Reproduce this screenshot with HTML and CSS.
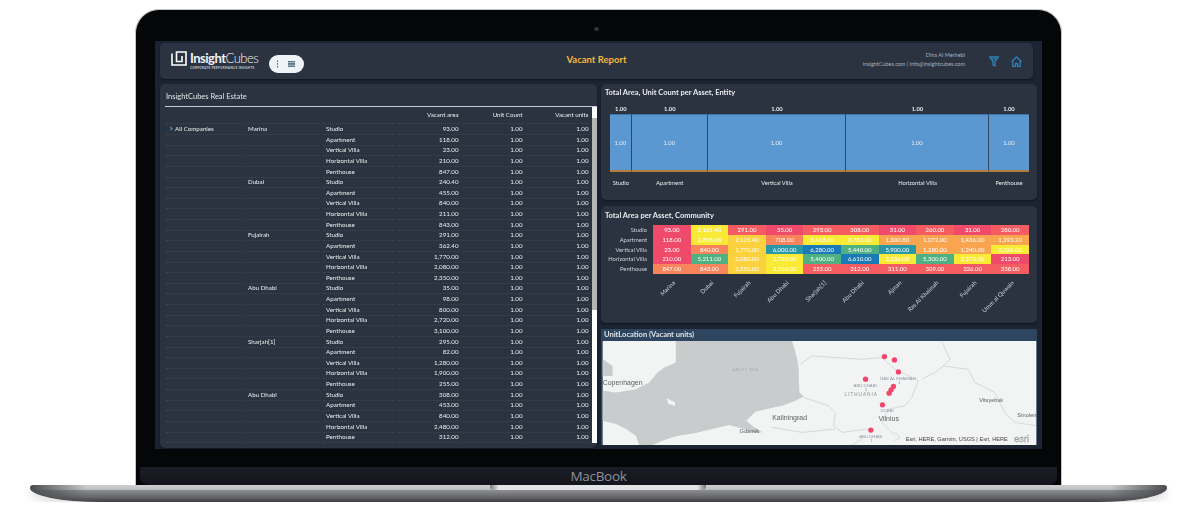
FILE: index.html
```html
<!DOCTYPE html>
<html lang="en">
<head>
    <meta charset="UTF-8">
    <meta name="viewport" content="width=device-width, initial-scale=1.0">
    <title>Vacant Report</title>
    <link rel="stylesheet" href="styles.css">
</head>
<body>
    <div class="laptop">
        <div class="lid">
            <div class="camera"></div>
            <div class="screen">
                <header class="topbar">
                    <div class="brand">
                        <svg class="logo-icon" viewBox="0 0 16 15" width="16" height="15"><path d="M1 2.5v11.500h14V1H5.500v9.500H11V5" fill="none" stroke="#fff" stroke-width="1.600"/></svg>
                        <div class="logo-text">
                            <div class="logo-name"><b>Insight</b>Cubes</div>
                            <div class="logo-sub">CORPORATE PERFORMANCE INSIGHTS</div>
                        </div>
                        <div class="pill">
                            <svg viewBox="0 0 3 8" width="3" height="8"><path d="M1.500 .5v1.500M1.500 3.200v1.500M1.500 6v1.500" stroke="#3d5a6c" stroke-width="1"/></svg>
                            <svg viewBox="0 0 7 6" width="7" height="6"><path d="M0 .7h7M0 2.300h7M0 3.800h7M0 5.300h7" stroke="#3d5a6c" stroke-width="1"/></svg>
                        </div>
                    </div>
                    <h1 class="report-title">Vacant Report</h1>
                    <div class="user">
                        <div class="user-text">
                            <div>Dina Al Merhebi</div>
                            <div>InsightCubes.com | info@insightcubes.com</div>
                        </div>
                        <svg viewBox="0 0 10 11" width="10" height="11"><path d="M.7 1h8.600L6 5.500V10L4 8.800V5.500ZM3 3.200h4" fill="none" stroke="#2f81b7" stroke-width="1.300"/></svg>
                        <svg viewBox="0 0 11 11" width="11" height="11"><path d="M.5 5.700 5.500 1l5 4.700M1.800 5v5.500h2.700V7.500h2v3h2.700V5" fill="none" stroke="#2f81b7" stroke-width="1.300"/></svg>
                    </div>
                </header>
                <div class="main">
                    <section class="panel table-panel">
                        <h2 class="table-title">InsightCubes Real Estate</h2>
                        <div class="table-wrap">
                            <div class="table">
                                <div class="row head"><span></span><span></span><span></span><span class="num">Vacant area</span><span class="num">Unit Count</span><span class="num">Vacant units</span></div>
                                <div class="row"><span class="tree"><i class="arrow"></i>All Companies</span><span>Marina</span><span>Studio</span><span class="num">93.00</span><span class="num">1.00</span><span class="num">1.00</span></div>
                                <div class="row"><span></span><span></span><span>Apartment</span><span class="num">118.00</span><span class="num">1.00</span><span class="num">1.00</span></div>
                                <div class="row"><span></span><span></span><span>Vertical Villa</span><span class="num">23.00</span><span class="num">1.00</span><span class="num">1.00</span></div>
                                <div class="row"><span></span><span></span><span>Horizontal Villa</span><span class="num">210.00</span><span class="num">1.00</span><span class="num">1.00</span></div>
                                <div class="row"><span></span><span></span><span>Penthouse</span><span class="num">847.00</span><span class="num">1.00</span><span class="num">1.00</span></div>
                                <div class="row"><span></span><span>Dubai</span><span>Studio</span><span class="num">240.40</span><span class="num">1.00</span><span class="num">1.00</span></div>
                                <div class="row"><span></span><span></span><span>Apartment</span><span class="num">455.00</span><span class="num">1.00</span><span class="num">1.00</span></div>
                                <div class="row"><span></span><span></span><span>Vertical Villa</span><span class="num">840.00</span><span class="num">1.00</span><span class="num">1.00</span></div>
                                <div class="row"><span></span><span></span><span>Horizontal Villa</span><span class="num">211.00</span><span class="num">1.00</span><span class="num">1.00</span></div>
                                <div class="row"><span></span><span></span><span>Penthouse</span><span class="num">843.00</span><span class="num">1.00</span><span class="num">1.00</span></div>
                                <div class="row"><span></span><span>Fujairah</span><span>Studio</span><span class="num">291.00</span><span class="num">1.00</span><span class="num">1.00</span></div>
                                <div class="row"><span></span><span></span><span>Apartment</span><span class="num">362.40</span><span class="num">1.00</span><span class="num">1.00</span></div>
                                <div class="row"><span></span><span></span><span>Vertical Villa</span><span class="num">1,770.00</span><span class="num">1.00</span><span class="num">1.00</span></div>
                                <div class="row"><span></span><span></span><span>Horizontal Villa</span><span class="num">2,080.00</span><span class="num">1.00</span><span class="num">1.00</span></div>
                                <div class="row"><span></span><span></span><span>Penthouse</span><span class="num">2,350.00</span><span class="num">1.00</span><span class="num">1.00</span></div>
                                <div class="row"><span></span><span>Abu Dhabi</span><span>Studio</span><span class="num">35.00</span><span class="num">1.00</span><span class="num">1.00</span></div>
                                <div class="row"><span></span><span></span><span>Apartment</span><span class="num">98.00</span><span class="num">1.00</span><span class="num">1.00</span></div>
                                <div class="row"><span></span><span></span><span>Vertical Villa</span><span class="num">800.00</span><span class="num">1.00</span><span class="num">1.00</span></div>
                                <div class="row"><span></span><span></span><span>Horizontal Villa</span><span class="num">2,720.00</span><span class="num">1.00</span><span class="num">1.00</span></div>
                                <div class="row"><span></span><span></span><span>Penthouse</span><span class="num">3,100.00</span><span class="num">1.00</span><span class="num">1.00</span></div>
                                <div class="row"><span></span><span>Sharjah[1]</span><span>Studio</span><span class="num">295.00</span><span class="num">1.00</span><span class="num">1.00</span></div>
                                <div class="row"><span></span><span></span><span>Apartment</span><span class="num">82.00</span><span class="num">1.00</span><span class="num">1.00</span></div>
                                <div class="row"><span></span><span></span><span>Vertical Villa</span><span class="num">1,280.00</span><span class="num">1.00</span><span class="num">1.00</span></div>
                                <div class="row"><span></span><span></span><span>Horizontal Villa</span><span class="num">1,900.00</span><span class="num">1.00</span><span class="num">1.00</span></div>
                                <div class="row"><span></span><span></span><span>Penthouse</span><span class="num">255.00</span><span class="num">1.00</span><span class="num">1.00</span></div>
                                <div class="row"><span></span><span>Abu Dhabi</span><span>Studio</span><span class="num">308.00</span><span class="num">1.00</span><span class="num">1.00</span></div>
                                <div class="row"><span></span><span></span><span>Apartment</span><span class="num">453.00</span><span class="num">1.00</span><span class="num">1.00</span></div>
                                <div class="row"><span></span><span></span><span>Vertical Villa</span><span class="num">840.00</span><span class="num">1.00</span><span class="num">1.00</span></div>
                                <div class="row"><span></span><span></span><span>Horizontal Villa</span><span class="num">2,480.00</span><span class="num">1.00</span><span class="num">1.00</span></div>
                                <div class="row"><span></span><span></span><span>Penthouse</span><span class="num">312.00</span><span class="num">1.00</span><span class="num">1.00</span></div>
                            </div>
                            <div class="scrollbar"><div class="thumb"></div></div>
                        </div>
                    </section>
                    <div class="charts">
                        <section class="panel chart-panel">
                            <h2 class="chart-title">Total Area, Unit Count per Asset, Entity</h2>
                            <div class="mekko">
                                <span>1.00</span><span>1.00</span><span>1.00</span><span>1.00</span><span>1.00</span>
                                <span class="bar">1.00</span><span class="bar">1.00</span><span class="bar">1.00</span><span class="bar">1.00</span><span class="bar">1.00</span>
                                <span class="mekko-label">Studio</span><span class="mekko-label">Apartment</span><span class="mekko-label">Vertical Villa</span><span class="mekko-label">Horizontal Villa</span><span class="mekko-label">Penthouse</span>
                            </div>
                        </section>
                        <section class="panel chart-panel">
                            <h2 class="chart-title heat-title">Total Area per Asset, Community</h2>
                            <div class="heat">
                                <span class="heat-row">Studio</span>
                                <span class="c1">93.00</span><span class="c6">3,165.40</span><span class="c2">291.00</span><span class="c1">35.00</span><span class="c2">293.00</span><span class="c2">308.00</span><span class="c1">31.00</span><span class="c2">260.00</span><span class="c1">31.00</span><span class="c2">280.00</span>
                                <span class="heat-row">Apartment</span>
                                <span class="c1">118.00</span><span class="c6">2,893.00</span><span class="c5">2,125.40</span><span class="c3">708.00</span><span class="c6">3,418.00</span><span class="c6">3,782.00</span><span class="c4">1,300.80</span><span class="c4">1,072.00</span><span class="c4">1,436.00</span><span class="c4">1,293.20</span>
                                <span class="heat-row">Vertical Villa</span>
                                <span class="c1">23.00</span><span class="c3">840.00</span><span class="c5">1,770.00</span><span class="c8">6,000.00</span><span class="c9">6,280.00</span><span class="c7">5,440.00</span><span class="c8">5,900.00</span><span class="c4">1,280.00</span><span class="c4">1,240.00</span><span class="c6">3,336.00</span>
                                <span class="heat-row">Horizontal Villa</span>
                                <span class="c1">210.00</span><span class="c7">5,211.00</span><span class="c5">2,080.00</span><span class="c6">2,720.00</span><span class="c7">5,400.00</span><span class="c9">6,610.00</span><span class="c6">3,136.00</span><span class="c7">5,300.00</span><span class="c6">2,573.00</span><span class="c1">213.00</span>
                                <span class="heat-row">Penthouse</span>
                                <span class="c3">847.00</span><span class="c3">843.00</span><span class="c5">2,350.00</span><span class="c6">3,100.00</span><span class="c2">255.00</span><span class="c2">312.00</span><span class="c2">311.00</span><span class="c2">309.00</span><span class="c2">326.00</span><span class="c2">338.00</span>
                            </div>
                            <div class="heat-axis">
                                <div><span>Marina</span></div><div><span>Dubai</span></div><div><span>Fujairah</span></div><div><span>Abu Dhabi</span></div><div><span>Sharjah[1]</span></div><div><span>Abu Dhabi</span></div><div><span>Ajman</span></div><div><span>Ras Al Khaimah</span></div><div><span>Fujairah</span></div><div><span>Umm al Quwain</span></div>
                            </div>
                        </section>
                        <section class="map-panel">
                            <h2 class="map-title">UnitLocation (Vacant units)</h2>
                            <svg class="map" viewBox="20 45 1305 313" width="435" height="104">
                                <rect x="20" y="45" width="1305" height="313" fill="#f2f3f3"/>
                                <path class="sea" d="M240 45H590C600 80 612 110 610 150L612 200 625 212 600 225 560 240 520 248 480 258 452 285 470 300 500 320 480 322 440 308 400 298 350 310 300 322 240 332 200 345 170 358H130L120 330 90 310 60 295 20 285V195L60 200 120 190 160 170 185 140 205 125 240 110Z"/>
                                <path class="sea" d="M20 100 50 120V150H20Z"/>
                                <path d="M214 217 238 229 237 241 216 233Z" fill="#f2f3f3"/>
                                <path class="border" d="M615 115 650 90 720 95 800 100 860 95 900 130 970 165 950 215 930 240 880 250 860 290 900 330M1040 45 1065 100 1045 120 1020 140 980 160M1045 120 1120 130 1140 170 1200 200 1230 260 1260 290 1325 300M625 215 700 240 720 260 715 300 740 320 820 310M530 305 620 320 720 310M900 320 915 335 900 345M770 358 800 340"/>
                                <text class="city" x="20" y="176">Copenhagen</text>
                                <text class="faint" x="410" y="135">BALTIC SEA</text>
                                <text class="city" x="530" y="284">Kaliningrad</text>
                                <text class="faint" x="605" y="282">SIA</text>
                                <text class="city small" x="432" y="322">Gdansk</text>
                                <text class="country" x="748" y="211">LITHUANIA</text>
                                <text class="city" x="850" y="285">Vilnius</text>
                                <text class="city small" x="1153" y="230">Vitsyebsk</text>
                                <text class="city small" x="1268" y="274">Smolensk</text>
                                <text class="pin-label" x="855" y="161">RAS AL KHAIMAH</text>
                                <text class="pin-label" x="909" y="174">1</text>
                                <text class="pin-label" x="775" y="182">ABU DHABI</text>
                                <text class="pin-label" x="809" y="196">1</text>
                                <text class="pin-label" x="856" y="259">DUBAI</text>
                                <text class="pin-label" x="792" y="336">ABU DHABI</text>
                                <text class="pin-label" x="825" y="349">1</text>
                                <g class="pins">
                                    <circle cx="868" cy="92" r="8"/><circle cx="898" cy="102" r="8"/><circle cx="910" cy="138" r="8"/>
                                    <circle cx="811" cy="160" r="8"/><circle cx="895" cy="182" r="8"/><circle cx="888" cy="192" r="8"/>
                                    <circle cx="882" cy="202" r="8"/><circle cx="862" cy="237" r="8"/><circle cx="827" cy="313" r="8"/>
                                </g>
                                <rect x="928" y="330" width="317" height="22" fill="#f2f3f3" opacity=".8"/>
                                <text class="credit" x="932" y="347">Esri, HERE, Garmin, USGS | Esri, HERE</text>
                                <text class="esri" x="1258" y="350">esri</text>
                            </svg>
                        </section>
                    </div>
                </div>
            </div>
            <div class="chin">MacBook</div>
        </div>
        <div class="base"><div class="notch"></div></div>
    </div>
</body>
</html>
```

FILE: styles.css
```css
body {
    margin: 0;
    background: #fff;
    font-family: Lato, "Liberation Sans", sans-serif;
    overflow: hidden;
}

.laptop {
    padding: 9px 12px 0 30px;
}

/* lid + screen */
.lid {
    box-sizing: border-box;
    width: 927px;
    height: 476px;
    margin-left: 105px;
    padding: 31px 20px 0;
    background: #040607;
    border: 1px solid #c4c5c6;
    border-bottom: 0;
    border-radius: 24px 24px 0 0;
    position: relative;
}
.camera {
    position: absolute;
    top: 17px;
    left: 458px;
    width: 5px;
    height: 4px;
    border-radius: 50%;
    background: #30343a;
}
.screen {
    box-sizing: border-box;
    width: 887px;
    height: 408px;
    margin-left: -1px;
    padding: 2px 5px 0;
    background: #1c2433;
    filter: blur(.3px);
}
.chin {
    position: absolute;
    left: 4px;
    right: 4px;
    bottom: 0;
    height: 18px;
    background: linear-gradient(#1b1d25, #15161c);
    border-radius: 0 0 8px 8px;
    color: #8f9196;
    font-family: "Open Sans", sans-serif;
    font-size: 13.500px;
    line-height: 18px;
    text-align: center;
    letter-spacing: -.3px;
}

/* top bar */
.topbar {
    display: grid;
    grid-template-columns: 1fr auto 1fr;
    align-items: center;
    height: 36px;
    margin-right: 4px;
    padding: 0 11px 0 11px;
    background: #2b3340;
    border-radius: 5px;
    box-shadow: 0 1px 2px #11161f;
}
.brand {
    display: flex;
    align-items: center;
}
.logo-icon {
    margin: -6px 3px 0 0;
}
.logo-text {
    width: 68px;
}
.logo-name {
    color: #f2f4f6;
    font-size: 13px;
    font-weight: 300;
    line-height: 15px;
    letter-spacing: -.5px;
    white-space: nowrap;
}
.logo-name b {
    font-weight: 700;
}
.logo-sub {
    color: #cfd3d8;
    font-size: 3px;
    line-height: 5px;
    letter-spacing: .3px;
    font-weight: 700;
    white-space: nowrap;
}
.pill {
    display: flex;
    align-items: center;
    justify-content: space-between;
    width: 35px;
    height: 18px;
    box-sizing: border-box;
    margin: 5px 0 0 11px;
    padding: 0 9px 0 7px;
    border-radius: 9px;
    background: #edf3f7;
}
.report-title {
    margin: -3px 0 0;
    color: #f4b83e;
    font-size: 9.500px;
    font-weight: 700;
}
.user {
    display: flex;
    align-items: center;
    justify-content: flex-end;
    gap: 12px;
    color: #aab1bb;
    font-size: 5.500px;
    line-height: 9px;
}
.user-text {
    text-align: right;
    margin-right: 12px;
    margin-top: -3px;
}

/* panels */
.main {
    display: grid;
    grid-template-columns: 437px 436px;
    column-gap: 4px;
    margin-top: 5px;
}
.panel {
    background: #2b3340;
    border-radius: 5px;
    box-shadow: 0 1px 2px #11161f;
}
.table-panel {
    height: 364px;
    padding-left: 5px;
    box-sizing: border-box;
}
.table-title {
    box-sizing: border-box;
    height: 23px;
    margin: 0;
    padding: 7px 0 0 1px;
    border-bottom: 1px solid #c7ccd2;
    color: #e3e6ea;
    font-size: 7.500px;
    font-weight: 400;
    line-height: 11px;
}
.table-wrap {
    display: flex;
    gap: 2px;
    padding-left: 1px;
}
.table {
    width: 424px;
}
.row {
    display: grid;
    grid-template-columns: 76px 75px 72px 62px 61px 63px;
    column-gap: 3px;
    height: 10.630px;
    color: #eceef1;
    font-size: 6.200px;
    line-height: 11px;
}
.row.head {
    height: 16px;
    line-height: 16px;
}
.row span {
    box-sizing: border-box;
    padding-left: 3px;
    border-bottom: 1px dotted #3d4552;
    white-space: nowrap;
}
.row span.num {
    padding: 0 1.500px 0 0;
    text-align: right;
}
.row span.tree {
    padding-left: 9px;
    position: relative;
}
.arrow {
    position: absolute;
    left: 3px;
    top: 4px;
    width: 2px;
    height: 2px;
    border-top: 1px solid #5b97d1;
    border-right: 1px solid #5b97d1;
    transform: rotate(45deg);
}
.scrollbar {
    width: 5px;
    height: 336px;
    padding-top: 11px;
    box-sizing: border-box;
    background: #fff;
}
.thumb {
    height: 192px;
    background: #b5b5b5;
}

/* charts column */
.charts {
    display: grid;
    grid-template-rows: 116px 117px 116px;
    row-gap: 6px;
}
.chart-title {
    margin: 0;
    padding: 4px 0 0 4px;
    color: #e9ecef;
    font-size: 7.500px;
    font-weight: 700;
    line-height: 10px;
}
.heat-title {
    padding-left: 4px;
    padding-top: 5px;
}
.mekko {
    display: grid;
    grid-template-columns: 21.600px 76.400px 138px 143px 40px;
    grid-template-rows: 11px 58px 25px;
    width: 419px;
    margin: 5px 0 0 9px;
    color: #e9ecef;
    font-size: 5.800px;
    line-height: 12px;
    text-align: center;
    font-weight: 700;
}
.mekko .bar {
    background: #5b97d1;
    border-top: 1px solid #3f76a8;
    border-bottom: 2px solid #b07d3a;
    border-right: 1px solid #33465c;
    box-sizing: border-box;
    line-height: 55px;
    font-weight: 400;
}
.mekko .bar:nth-child(10) {
    border-right: 0;
}
.mekko .mekko-label {
    font-weight: 400;
    line-height: 22px;
}

.heat {
    display: grid;
    grid-template-columns: 47px repeat(10, 37.600px);
    grid-auto-rows: 9.800px;
    margin: 4px 0 0 5px;
    color: #fff;
    font-size: 6px;
    line-height: 10px;
    text-align: center;
}
.heat .heat-row {
    padding-right: 6px;
    margin-left: -10px;
    color: #cfd3d8;
    font-size: 5.800px;
    text-align: right;
    white-space: nowrap;
}
.c1 { background: #ef4a6a; }
.c2 { background: #f45c62; }
.c3 { background: #f7845b; }
.c4 { background: #f9a44f; }
.c5 { background: #fcd13e; }
.c6 { background: #f9ea36; }
.c7 { background: #4fb182; }
.c8 { background: #2a97a6; }
.c9 { background: #1a7ab5; }

.heat-axis {
    display: grid;
    grid-template-columns: repeat(10, 37.600px);
    margin: 5px 0 0 52px;
    color: #cfd3d8;
    font-size: 6px;
    line-height: 7px;
}
.heat-axis div {
    display: flex;
    justify-content: flex-end;
    padding-right: 50%;
    height: 7px;
}
.heat-axis span {
    flex: none;
    transform-origin: 100% 0;
    transform: rotate(-45deg);
    white-space: nowrap;
}

.map-panel {
    background: #2e4560;
    height: 116px;
    overflow: hidden;
}
.map-title {
    height: 12px;
    margin: 0;
    padding-left: 3px;
    color: #dfe3e8;
    font-size: 7.500px;
    font-weight: 700;
    line-height: 12px;
}
.map {
    display: block;
    margin-left: 1px;
    font-family: "Liberation Sans", sans-serif;
}
.sea { fill: #cacbcd; }
.border { fill: none; stroke: #c9cacc; stroke-width: 2; }
.city { fill: #5c5f63; font-size: 21px; }
.city.small { font-size: 17px; }
.faint { fill: #a8abaf; font-size: 12px; letter-spacing: 1px; }
.country { fill: #8a8d92; font-size: 14px; letter-spacing: 3px; }
.pin-label { fill: #8d97a5; font-size: 13px; }
.pins { fill: #f0466c; }
.credit { fill: #3c3f44; font-size: 17px; }
.esri { fill: none; stroke: #9a9da1; stroke-width: 1.500; font-size: 28px; }

/* base of the laptop */
.base {
    height: 17px;
    width: 1137px;
    background:
        linear-gradient(90deg, #4a4b4e 0, rgba(74, 75, 78, 0) 5%, rgba(74, 75, 78, 0) 95%, #4a4b4e 100%),
        linear-gradient(#cfcfd1 0, #bfc0c2 26%, #8b8c8f 32%, #67686b 70%, #3d3e41 100%);
    border-radius: 3px 3px 70px 70px / 3px 3px 14px 14px;
    box-shadow: 0 5px 8px rgba(0, 0, 0, .12);
    position: relative;
}
.notch {
    position: absolute;
    top: 0;
    left: 460px;
    width: 216px;
    height: 5px;
    background: linear-gradient(90deg, #77787b, #e4e4e6 4%, #e4e4e6 96%, #77787b);
    border-radius: 0 0 4px 4px;
}
```
